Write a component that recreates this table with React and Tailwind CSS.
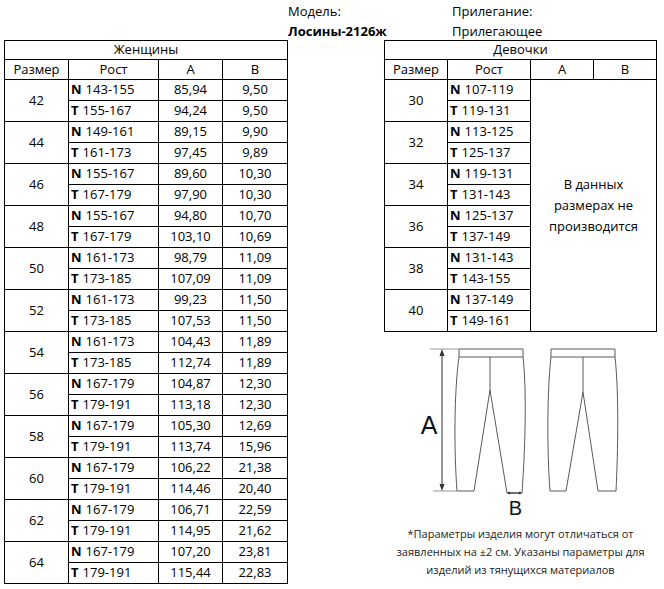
import { Fragment } from "react";

const WOMEN = [
  { size: 42, n: ["143-155", "85,94", "9,50"], t: ["155-167", "94,24", "9,50"] },
  { size: 44, n: ["149-161", "89,15", "9,90"], t: ["161-173", "97,45", "9,89"] },
  { size: 46, n: ["155-167", "89,60", "10,30"], t: ["167-179", "97,90", "10,30"] },
  { size: 48, n: ["155-167", "94,80", "10,70"], t: ["167-179", "103,10", "10,69"] },
  { size: 50, n: ["161-173", "98,79", "11,09"], t: ["173-185", "107,09", "11,09"] },
  { size: 52, n: ["161-173", "99,23", "11,50"], t: ["173-185", "107,53", "11,50"] },
  { size: 54, n: ["161-173", "104,43", "11,89"], t: ["173-185", "112,74", "11,89"] },
  { size: 56, n: ["167-179", "104,87", "12,30"], t: ["179-191", "113,18", "12,30"] },
  { size: 58, n: ["167-179", "105,30", "12,69"], t: ["179-191", "113,74", "15,96"] },
  { size: 60, n: ["167-179", "106,22", "21,38"], t: ["179-191", "114,46", "20,40"] },
  { size: 62, n: ["167-179", "106,71", "22,59"], t: ["179-191", "114,95", "21,62"] },
  { size: 64, n: ["167-179", "107,20", "23,81"], t: ["179-191", "115,44", "22,83"] },
];

const GIRLS = [
  { size: 30, n: "107-119", t: "119-131" },
  { size: 32, n: "113-125", t: "125-137" },
  { size: 34, n: "119-131", t: "131-143" },
  { size: 36, n: "125-137", t: "137-149" },
  { size: 38, n: "131-143", t: "143-155" },
  { size: 40, n: "137-149", t: "149-161" },
];

const cell = "bg-white flex items-center justify-center";
const growthCell = "bg-white flex items-center pl-[2px]";

function Growth({ letter, value }) {
  return (
    <div className={growthCell}>
      <span className="font-bold">{letter}</span>
      <span className="ml-[4px]">{value}</span>
    </div>
  );
}

function HeadRow({ title }) {
  return (
    <>
      <div className={`${cell} col-span-4`}>{title}</div>
      <div className={cell}>Размер</div>
      <div className={cell}>Рост</div>
      <div className={cell}>A</div>
      <div className={cell}>B</div>
    </>
  );
}

function WomenTable() {
  return (
    <div className="ml-[4px] grid grid-cols-[63px_89px_63px_64px] grid-rows-[18px_19px_repeat(24,20px)] gap-px bg-black p-px">
      <HeadRow title="Женщины" />
      {WOMEN.map((r) => (
        <Fragment key={r.size}>
          <div className={`${cell} row-span-2`}>{r.size}</div>
          <Growth letter="N" value={r.n[0]} />
          <div className={cell}>{r.n[1]}</div>
          <div className={cell}>{r.n[2]}</div>
          <Growth letter="T" value={r.t[0]} />
          <div className={cell}>{r.t[1]}</div>
          <div className={cell}>{r.t[2]}</div>
        </Fragment>
      ))}
    </div>
  );
}

function GirlsTable() {
  return (
    <div className="grid grid-cols-[62px_82px_62px_62px] grid-rows-[18px_19px_repeat(12,20px)] gap-px bg-black p-px">
      <HeadRow title="Девочки" />
      <div className={`${cell} col-start-3 col-span-2 row-start-3 row-span-12 text-center leading-[21px]`}>
        В данных
        <br />
        размерах не
        <br />
        производится
      </div>
      {GIRLS.map((r) => (
        <Fragment key={r.size}>
          <div className={`${cell} row-span-2`}>{r.size}</div>
          <Growth letter="N" value={r.n} />
          <Growth letter="T" value={r.t} />
        </Fragment>
      ))}
    </div>
  );
}

function Leggings() {
  return (
    <svg className="block" width="272" height="193" viewBox="0 0 272 193" fill="none">
      {/* measurement ticks */}
      <path d="M46 17H75M49 159H73" stroke="#9a9a9a" strokeWidth="1" />
      {/* A arrow */}
      <path d="M58 20V156" stroke="#333" strokeWidth="1" />
      <path d="M55.5 24L58 17L60.5 24Z" fill="#333" />
      <path d="M55.5 152L58 159L60.5 152Z" fill="#333" />
      <text x="45" y="102" textAnchor="middle" fontFamily="'Liberation Sans', Arial, sans-serif" fontSize="25" fill="#111">
        A
      </text>

      {/* front */}
      <g stroke="#5a5a5a" strokeWidth="1" strokeLinejoin="round">
        <rect x="75" y="17" width="64" height="8" fill="#fff" />
        <path d="M75 25C70 60 70 120 73 159L90 159L106 58L123 161L138 161C141 120 143 60 139 25" />
        <path d="M106 25V58" />
      </g>
      {/* B arrow */}
      <path d="M124 161H137" stroke="#333" strokeWidth="1" />
      <path d="M123 161L126 159.5V162.5Z M138 161L135 159.5V162.5Z" fill="#333" />
      <text x="131.5" y="183" textAnchor="middle" fontFamily="'Liberation Sans', Arial, sans-serif" fontSize="20" fill="#111">
        B
      </text>

      {/* back */}
      <g stroke="#5a5a5a" strokeWidth="1" strokeLinejoin="round">
        <rect x="167" y="17" width="64" height="8" fill="#fff" />
        <path d="M167 25C163 60 163 120 166 159L182 159L199 60L214 159L232 159C234 120 235 60 231 25" />
        <path d="M199 25V60" />
      </g>
    </svg>
  );
}

export default function App() {
  return (
    <div className="w-[664px] h-[589px] overflow-hidden bg-white text-black text-[13px] font-['Open_Sans','Noto_Sans',sans-serif]">
      <div className="flex h-[40px] pl-[288px] pt-[1px] leading-[20px]">
        <div className="w-[164px]">
          <div>Модель:</div>
          <div className="font-bold">Лосины-2126ж</div>
        </div>
        <div>
          <div>Прилегание:</div>
          <div>Прилегающее</div>
        </div>
      </div>
      <div className="flex items-start">
        <WomenTable />
        <div className="ml-[96px] flex flex-col">
          <GirlsTable />
          <Leggings />
          <p className="w-[273px] text-center text-[11px] leading-[18px] text-[#222]">
            *Параметры изделия могут отличаться от заявленных на ±2 см. Указаны параметры для изделий из тянущихся материалов
          </p>
        </div>
      </div>
    </div>
  );
}
